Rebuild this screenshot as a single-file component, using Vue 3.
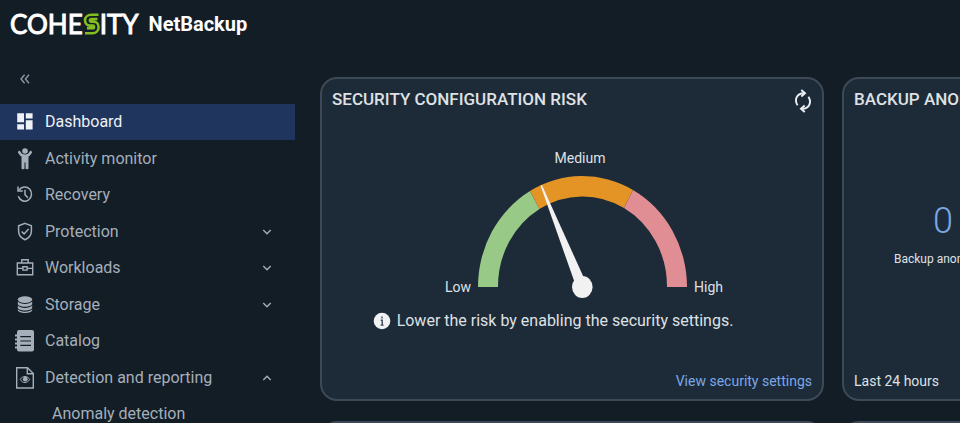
<script setup>
const items = [
  { icon: 'dashboard', label: 'Dashboard', active: true },
  { icon: 'activity', label: 'Activity monitor' },
  { icon: 'recovery', label: 'Recovery' },
  { icon: 'protection', label: 'Protection', group: true },
  { icon: 'workloads', label: 'Workloads', group: true },
  { icon: 'storage', label: 'Storage', group: true },
  { icon: 'catalog', label: 'Catalog' },
  { icon: 'detection', label: 'Detection and reporting', group: true, open: true },
  { label: 'Anomaly detection', child: true }
]
</script>

<template>
  <div class="app">
    <header class="top">
      <div class="logo">
        <span>COHE</span>
        <svg class="logo-mark" viewBox="0 0 17 22" role="img" aria-label="S">
          <g fill="none" stroke="#84bd1f" stroke-width="2.600">
            <path d="M15.500 1.800H8.500C4.500 1.800 2 4.200 2 7.300S4.300 12.600 7 12.600H9.800C11.400 12.600 11.400 15.300 9.800 15.300H4" />
            <path d="M14.500 6H8.500C6.400 6 6.400 8.600 8.500 8.600H10.500C13.500 8.600 15.600 11 15.600 14.200S13.300 20.200 9.500 20.200H2" />
          </g>
        </svg>
        <span>ITY</span>
      </div>
      <span class="product">NetBackup</span>
    </header>

    <div class="layout">
      <aside class="side">
        <button class="collapse" type="button" aria-label="Collapse menu">
          <svg viewBox="0 0 10 10"><path d="M4.600.8 1 5l3.600 4.200M9 .8 5.400 5 9 9.200" fill="none" stroke="currentColor" stroke-width="1.400" /></svg>
        </button>
        <nav>
          <ul class="menu">
            <li v-for="item in items" :key="item.label">
              <a href="#" class="item" :class="{ active: item.active, child: item.child }">
                <svg v-if="item.icon" class="icon" viewBox="0 0 20 22" aria-hidden="true">
                  <g v-if="item.icon === 'dashboard'" fill="currentColor">
                    <path d="M2.200 2.200h6.800v9H2.200zM10.800 2.200h6.800v5.200h-6.800zM2.200 13.200h6.800v5.300H2.200zM10.800 9.300h6.800v9.200h-6.800z" />
                  </g>
                  <g v-else-if="item.icon === 'activity'" fill="currentColor">
                    <circle cx="10" cy="3" r="2.800" />
                    <path d="M3.500 3.200c.9-.7 1.500-.3 2 .5C6.800 6 8.300 6.400 10 6.400s3.200-.4 4.500-2.700c.5-.8 1.100-1.200 2-.5.8.6.6 1.300.1 2-1 1.600-1.800 2.600-3.100 3.400V20.600c0 1-3 1-3 0V14.500H9.500v6.100c0 1-3 1-3 0V8.600C5.200 7.800 4.400 6.800 3.400 5.200c-.5-.7-.7-1.400.1-2z" />
                  </g>
                  <g v-else-if="item.icon === 'recovery'" fill="none" stroke="currentColor" stroke-width="1.500">
                    <path d="M4 6.200A6.800 7.100 0 1 1 3.300 12.300" />
                    <path d="M3 2.500v4.500h4.800M10 5.800v5l2.800 2.800" />
                  </g>
                  <g v-else-if="item.icon === 'protection'" fill="none" stroke="currentColor" stroke-width="1.500">
                    <path d="M10 2.400 16.400 4.800V10c0 4.300-2.600 7-6.400 8.700C6.200 17 3.600 14.300 3.600 10V4.800z" />
                    <path d="m6.700 10.400 2.400 2.600 4.500-5" />
                  </g>
                  <g v-else-if="item.icon === 'workloads'" fill="none" stroke="currentColor" stroke-width="1.400">
                    <path d="M2.300 6h15.400v11.800H2.300zM6.800 6V2.800h6.400V6M2.300 11.400h5.500M12.200 11.400h5.500M7.900 9.800h4.200v3.300H7.900z" />
                  </g>
                  <g v-else-if="item.icon === 'storage'" fill="currentColor">
                    <ellipse cx="10" cy="5.600" rx="7.200" ry="3.400" />
                    <path d="M2.800 7.600c2.500 3.100 11.900 3.100 14.400 0v2.100c0 4-14.400 4-14.400 0z" />
                    <path d="M2.800 11.600c2.500 3.100 11.900 3.100 14.400 0v1.900c0 4-14.400 4-14.400 0z" />
                    <path d="M2.800 15.300c2.500 3.100 11.900 3.100 14.400 0v.8c0 4-14.400 4-14.400 0z" />
                  </g>
                  <g v-else-if="item.icon === 'catalog'">
                    <rect x="2" width="17" height="21.500" rx="2" fill="currentColor" />
                    <path d="M0 5.500h3M0 9.500h3M0 13.500h3M0 17.500h3" stroke="currentColor" stroke-width="2" />
                    <path d="M5.300 6.700H16M5.300 11H16M5.300 15.300H16" stroke="#131d26" stroke-width="1.200" />
                  </g>
                  <g v-else fill="none" stroke="currentColor" stroke-width="1.400">
                    <path d="M1.700.8h10.800L18.300 6.500V21H1.700zM12.300.8v6h6" />
                    <path d="M5.300 12.500c2-4 7.400-4 9.400 0-2 4-7.400 4-9.400 0z" stroke-width="1" />
                    <circle cx="10.300" cy="12.200" r="2.400" fill="currentColor" stroke="none" />
                  </g>
                </svg>
                <span class="label">{{ item.label }}</span>
                <svg v-if="item.group" class="chevron" :class="{ open: item.open }" viewBox="0 0 10 8" aria-hidden="true">
                  <path d="M1.300 2 5 5.800 8.700 2" fill="none" stroke="currentColor" stroke-width="1.400" />
                </svg>
              </a>
            </li>
          </ul>
        </nav>
      </aside>

      <main class="cards">
        <section class="card">
          <div class="card-head">
            <h2>SECURITY CONFIGURATION RISK</h2>
            <button class="refresh" type="button" aria-label="Refresh">
              <svg viewBox="0 0 18 24">
                <g fill="none" stroke="currentColor" stroke-width="1.900">
                  <path d="M3.600 16.300C.2 11.400 2.300 4.200 9.800 4.200M14.400 7.700c3.400 4.900 1.300 12.100-6.200 12.100" />
                  <path d="m7.300 1 3.700 3.200-3.700 3.300M10.700 16.500 7 19.800l3.700 3.200" />
                </g>
              </svg>
            </button>
          </div>
          <div class="risk">
            <svg class="gauge" viewBox="0 0 290 152" role="img" aria-label="Risk level: medium">
              <path d="M38 138A104.500 111 0 0 1 90 42L99.500 60A84.500 90 0 0 0 58 138z" fill="#98c987" />
              <path d="M90 42A104.500 111 0 0 1 193 41L184 59A84.500 90 0 0 0 99.500 60z" fill="#e39425" />
              <path d="M193 41A104.500 111 0 0 1 247 138H227A84.500 90 0 0 0 184 59z" fill="#e18d94" />
              <path d="M100.500 36.500 102 36.200 144 129 134.500 133z" fill="#f1f1f2" />
              <ellipse cx="142.300" cy="138" rx="10.300" ry="11" fill="#f1f1f2" />
              <text x="140" y="14" text-anchor="middle">Medium</text>
              <text x="5" y="143">Low</text>
              <text x="254" y="143">High</text>
            </svg>
            <p class="advice">
              <svg viewBox="0 0 18 18" aria-hidden="true">
                <circle cx="9" cy="9" r="8.300" fill="#f0f1f2" />
                <path d="M9 4.500v2M7.700 8.200h1.500v5M7.600 13.100h3" fill="none" stroke="#3b4855" stroke-width="1.400" />
              </svg>
              <span>Lower the risk by enabling the security settings.</span>
            </p>
          </div>
          <div class="card-foot end"><a href="#">View security settings</a></div>
        </section>

        <section class="card">
          <div class="card-head"><h2>BACKUP ANOMALIES</h2></div>
          <div class="stat">
            <span class="count">0</span>
            <span class="caption">Backup anomalies</span>
          </div>
          <div class="card-foot">Last 24 hours</div>
        </section>

        <section class="card"></section>
        <section class="card"></section>
      </main>
    </div>
  </div>
</template>

<style>
body {
  margin: 0;
  background: #131d26;
}
</style>

<style scoped>
.app {
  height: 100vh;
  display: flex;
  flex-direction: column;
  overflow: hidden;
  background: #131d26;
  color: #dfe1e4;
  font-family: Roboto, "Liberation Sans", sans-serif;
  font-size: 16px;
}
.top {
  display: flex;
  align-items: center;
  gap: 10px;
  flex: none;
  height: 48px;
  padding-left: 10px;
}
.logo {
  display: flex;
  align-items: center;
  color: #fff;
  font-family: Lato, sans-serif;
  font-size: 26px;
  line-height: 48px;
  -webkit-text-stroke: 1px #fff;
}
.logo-mark {
  width: 17px;
  height: 22px;
}
.product {
  color: #fff;
  font-size: 20px;
  font-weight: 700;
}
.layout {
  display: flex;
  flex: 1;
  min-height: 0;
}
.side {
  flex: none;
  width: 295px;
}
.collapse,
.refresh {
  display: block;
  padding: 0;
  border: 0;
  background: none;
}
.collapse {
  height: 56px;
  padding: 6px 20px 0;
  color: #8b97a6;
}
.collapse svg {
  display: block;
  width: 10px;
  height: 10px;
}
.menu {
  margin: 0;
  padding: 0;
  list-style: none;
}
.menu li:nth-child(even) {
  padding-top: 1px;
}
.item {
  display: flex;
  align-items: center;
  gap: 10px;
  height: 36px;
  padding: 0 23px 0 15px;
  box-sizing: border-box;
  padding-bottom: 1px;
  color: #a5afbb;
  text-decoration: none;
}
.item.active {
  background: #1f355e;
  color: #eef1f5;
}
.item.child {
  padding-left: 52px;
}
.icon {
  width: 20px;
  height: 22px;
}
.label {
  flex: 1;
}
.chevron {
  width: 10px;
  height: 8px;
}
.chevron.open {
  transform: rotate(180deg);
}
.cards {
  flex: 1;
  min-width: 0;
  display: grid;
  grid-template-columns: repeat(3, minmax(504px, 1fr));
  grid-auto-rows: min-content;
  gap: 20px 18px;
  padding: 29px 0 0 25px;
  overflow: hidden;
}
.card {
  box-sizing: border-box;
  display: flex;
  flex-direction: column;
  min-height: 324px;
  padding: 10px 10px 8px;
  border: 2px solid #3d4957;
  border-radius: 17px;
  background: #1d2b39;
}
.card:nth-child(n + 3) {
  grid-row: 2;
}
.card-head {
  display: flex;
  justify-content: space-between;
  height: 60px;
}
h2 {
  margin: 0;
  font-size: 17px;
  font-weight: 500;
  line-height: 20px;
}
.refresh {
  align-self: flex-start;
  color: #eef0f2;
}
.refresh svg {
  display: block;
  width: 18px;
  height: 24px;
}
.risk {
  display: flex;
  flex-direction: column;
  align-items: center;
  flex: 1;
  padding-right: 38px;
}
.gauge {
  display: block;
  width: 290px;
  height: 152px;
  margin-left: 64px;
}
.gauge text {
  fill: #dfe1e4;
  font-size: 14px;
}
.advice {
  display: flex;
  align-items: center;
  gap: 6px;
  margin: 10px 0 0;
}
.advice svg {
  width: 18px;
  height: 18px;
}
.card-foot {
  font-size: 14px;
  line-height: 20px;
}
.card-foot.end {
  text-align: right;
}
.card-foot a {
  color: #7ba7e6;
  text-decoration: none;
}
.stat {
  flex: 1;
  align-self: flex-start;
  display: flex;
  flex-direction: column;
  align-items: center;
  padding: 52px 0 0 40px;
}
.count {
  color: #7ba7e6;
  font-size: 36px;
  font-weight: 300;
  line-height: 40px;
}
.caption {
  padding-top: 10px;
  font-size: 12px;
  line-height: 16px;
}
</style>
